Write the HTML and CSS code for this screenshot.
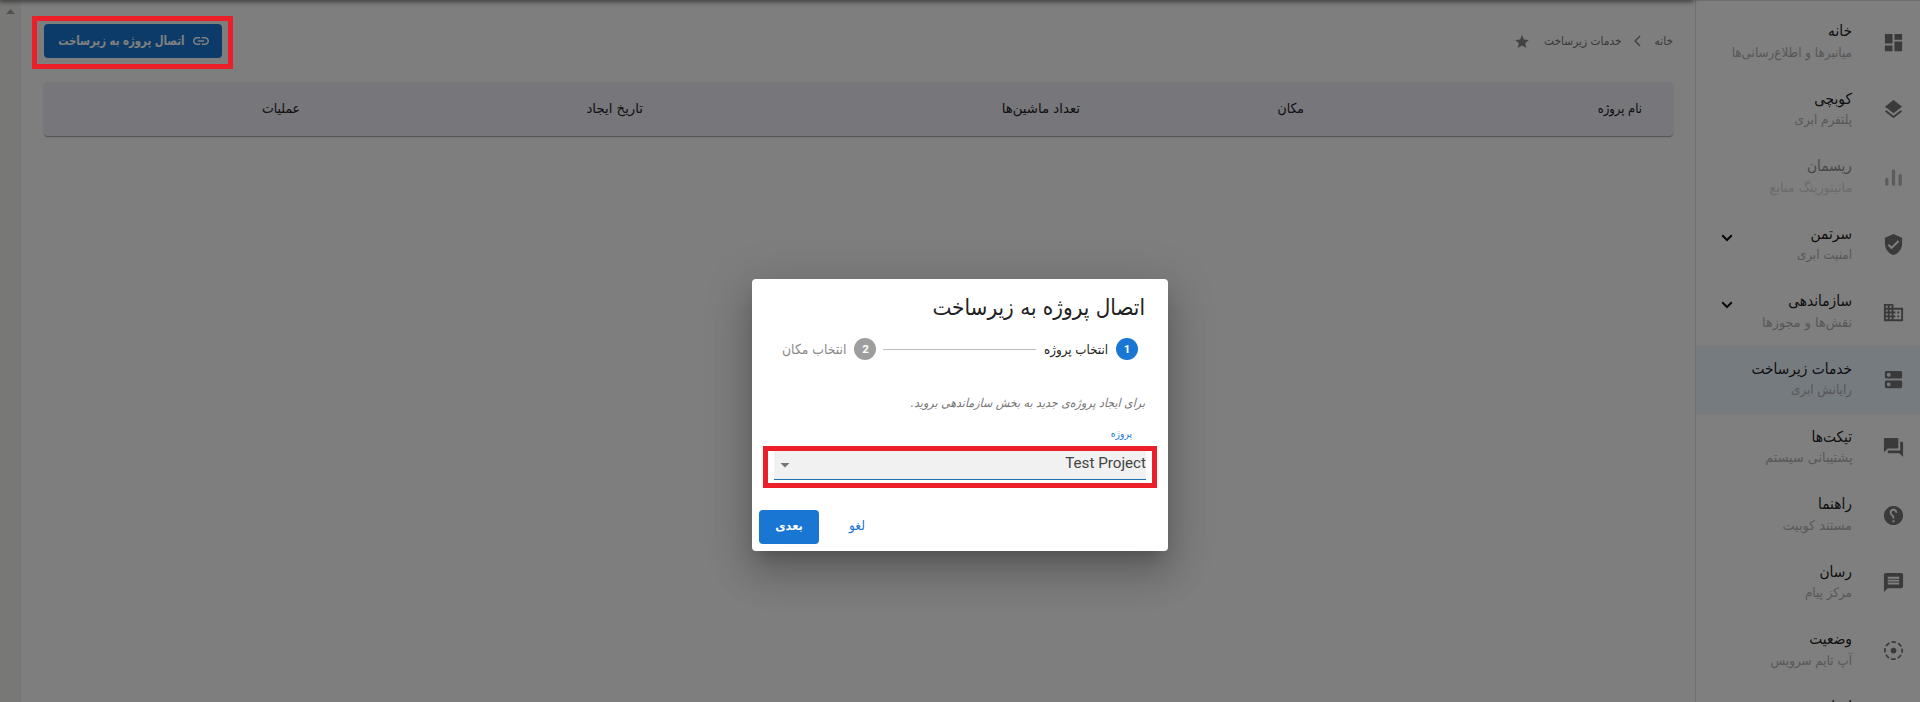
FILE: index.html
```html
<!DOCTYPE html>
<html lang="fa" dir="rtl">
<head>
<meta charset="utf-8">
<title>خدمات زیرساخت</title>
<link rel="stylesheet" href="styles.css">
</head>
<body>
<div class="app">
  <nav class="sidebar">
    <div class="item"><svg class="icon" viewBox="0 0 24 24"><path d="M3 13h8V3H3v10zm0 8h8v-6H3v6zm10 0h8V11h-8v10zm0-18v6h8V3h-8z"/></svg><div class="label"><b>خانه</b><small>میانبرها و اطلاع‌رسانی‌ها</small></div></div>
    <div class="item"><svg class="icon" viewBox="0 0 24 24"><path d="M11.99 18.54l-7.37-5.73L3 14.07l9 7 9-7-1.63-1.27-7.38 5.74zM12 16l7.36-5.73L21 9l-9-7-9 7 1.63 1.27L12 16z"/></svg><div class="label"><b>کوبچی</b><small>پلتفرم ابری</small></div></div>
    <div class="item disabled"><svg class="icon" viewBox="0 0 24 24"><g class="bars"><path d="M5 14v5M12 5v14M19 10v9"/></g></svg><div class="label"><b>ریسمان</b><small class="wide">مانیتورینگ منابع</small></div></div>
    <div class="item"><svg class="icon" viewBox="0 0 24 24"><path d="M12 1L3 5v6c0 5.550 3.840 10.740 9 12 5.160-1.260 9-6.450 9-12V5l-9-4zm-2 16l-4-4 1.410-1.410L10 14.170l6.590-6.590L18 9l-8 8z"/></svg><div class="label"><b>سرتمن</b><small>امنیت ابری</small></div><svg class="chev" viewBox="0 0 12 8"><path d="M1.200 1.200L6 6l4.800-4.800"/></svg></div>
    <div class="item"><svg class="icon" viewBox="0 0 24 24"><path d="M12 7V3H2v18h20V7H12zM6 19H4v-2h2v2zm0-4H4v-2h2v2zm0-4H4V9h2v2zm0-4H4V5h2v2zm4 12H8v-2h2v2zm0-4H8v-2h2v2zm0-4H8V9h2v2zm0-4H8V5h2v2zm10 12h-8v-2h2v-2h-2v-2h2v-2h-2V9h8v10zm-2-8h-2v2h2v-2zm0 4h-2v2h2v-2z"/></svg><div class="label"><b>سازماندهی</b><small class="wide">نقش‌ها و مجوزها</small></div><svg class="chev" viewBox="0 0 12 8"><path d="M1.200 1.200L6 6l4.800-4.800"/></svg></div>
    <div class="item active"><svg class="icon" viewBox="0 0 24 24"><path fill-rule="evenodd" d="M4.500 3h15c.8 0 1.500.7 1.500 1.500v5c0 .8-.7 1.500-1.500 1.500h-15C3.700 11 3 10.300 3 9.500v-5C3 3.700 3.700 3 4.500 3zM7 5a2 2 0 100 4 2 2 0 000-4zM4.500 13h15c.8 0 1.500.7 1.500 1.500v5c0 .8-.7 1.500-1.500 1.500h-15c-.8 0-1.500-.7-1.500-1.500v-5c0-.8.7-1.500 1.500-1.500zM7 15a2 2 0 100 4 2 2 0 000-4z"/></svg><div class="label"><b>خدمات زیرساخت</b><small>رایانش ابری</small></div></div>
    <div class="item"><svg class="icon" viewBox="0 0 24 24"><path d="M21 6h-2v9H6v2c0 .55.45 1 1 1h11l4 4V7c0-.55-.45-1-1-1zm-4 6V3c0-.55-.45-1-1-1H3c-.55 0-1 .45-1 1v14l4-4h10c.55 0 1-.45 1-1z"/></svg><div class="label"><b>تیکت‌ها</b><small class="wide">پشتیبانی سیستم</small></div></div>
    <div class="item"><svg class="icon flip" viewBox="0 0 24 24"><path d="M12 2C6.480 2 2 6.480 2 12s4.480 10 10 10 10-4.480 10-10S17.520 2 12 2zm1 17h-2v-2h2v2zm2.070-7.750l-.9.920C13.450 12.900 13 13.500 13 15h-2v-.5c0-1.100.45-2.100 1.170-2.830l1.240-1.260c.37-.36.59-.86.59-1.410 0-1.100-.9-2-2-2s-2 .9-2 2H8c0-2.210 1.790-4 4-4s4 1.790 4 4c0 .88-.36 1.680-.93 2.250z"/></svg><div class="label"><b>راهنما</b><small class="wide">مستند کوبیت</small></div></div>
    <div class="item"><svg class="icon" viewBox="0 0 24 24"><path d="M20 2H4c-1.100 0-1.990.9-1.990 2L2 22l4-4h14c1.100 0 2-.9 2-2V4c0-1.100-.9-2-2-2zm-2 12H6v-2h12v2zm0-3H6V9h12v2zm0-3H6V6h12v2z"/></svg><div class="label"><b>رسان</b><small>مرکز پیام</small></div></div>
    <div class="item"><svg class="icon" viewBox="0 0 24 24"><circle cx="12" cy="12" r="3"/><circle class="ring" cx="12" cy="12" r="9"/></svg><div class="label"><b>وضعیت</b><small>آپ تایم سرویس</small></div></div>
    <div class="item"><div class="icon"></div><div class="label"><b>اخبار</b></div></div>
  </nav>
  <main class="main">
    <div class="topline"></div>
    <header class="bar">
      <div class="crumbs">
        <span>خانه</span>
        <svg class="crumb-chev" viewBox="0 0 7 12"><path d="M6 1L1.200 6 6 11"/></svg>
        <span class="here">خدمات زیرساخت</span>
        <svg class="star" viewBox="2 2 20 19"><path d="M12 17.270L18.180 21l-1.640-7.030L22 9.240l-7.190-.61L12 2 9.190 8.630 2 9.240l5.460 4.730L5.820 21z"/></svg>
      </div>
      <div class="btn connect"><svg class="link" viewBox="2 7 20 10"><path d="M3.900 12c0-1.710 1.390-3.100 3.100-3.100h4V7H7c-2.760 0-5 2.240-5 5s2.240 5 5 5h4v-1.900H7c-1.710 0-3.100-1.390-3.100-3.100zM8 13h8v-2H8v2zm9-6h-4v1.900h4c1.710 0 3.100 1.390 3.100 3.100s-1.390 3.100-3.100 3.100h-4V17h4c2.760 0 5-2.240 5-5s-2.240-5-5-5z"/></svg><span>اتصال پروژه به زیرساخت</span></div>
    </header>
    <div class="thead"><span class="narrow">نام پروژه</span><span>مکان</span><span class="wide">تعداد ماشین‌ها</span><span class="wide">تاریخ ایجاد</span><span>عملیات</span></div>
  </main>
  <div class="scroll"><i></i></div>
</div>
<div class="overlay">
  <section class="dialog">
    <h2><span>اتصال پروژه به زیرساخت</span></h2>
    <div class="steps">
      <i class="dot on">1</i><span class="step on">انتخاب پروژه</span><hr><i class="dot">2</i><span class="step last">انتخاب مکان</span>
    </div>
    <p class="hint"><span>برای ایجاد پروژه‌ی جدید به بخش سازماندهی بروید.</span></p>
    <label class="flabel">پروژه</label>
    <div class="field"><span dir="ltr">Test Project</span><i class="caret"></i></div>
    <footer class="actions"><a class="cancel">لغو</a><div class="btn next">بعدی</div></footer>
    <div class="mark mark-field"></div>
  </section>
</div>
<div class="mark mark-btn"></div>
</body>
</html>
```
FILE: styles.css
```css
* { box-sizing: border-box; }
body { margin: 0; width: 1920px; height: 702px; overflow: hidden; position: relative; font-family: "DejaVu Sans Condensed", "DejaVu Sans", sans-serif; font-stretch: condensed; font-size: 12px; color: #222; }
span, b, small, label, a { white-space: nowrap; }
.app { display: flex; height: 702px; overflow: hidden; background: #fdfdff; }
.sidebar { width: 225px; padding-top: 7px; background: #fff; border-left: 1px solid #dcdce2; border-top: 1px solid #ddd; flex: none; }
.item { display: flex; height: 67.6px; padding-right: 15px; }
.icon { width: 23px; height: 23px; margin-top: 22.500px; flex: none; fill: #757575; overflow: visible; }
.bars { stroke: #757575; stroke-width: 3.400; stroke-linecap: round; }
.flip { transform: scaleX(-1); }
.ring { fill: none; stroke: #757575; stroke-width: 1.800; stroke-dasharray: 4.700 2.370; stroke-dashoffset: 2.350; }
.label { margin-right: 30px; padding-top: 13px; display: flex; flex-direction: column; align-items: flex-start; flex: 1; }
.label b { font-weight: 400; font-size: 15.300px; line-height: 21px; height: 20.500px; color: #212121; }
.label small { font-size: 13.300px; line-height: 21px; height: 21px; color: #b0b0b0; }
.wide { transform: scaleX(1.070); transform-origin: right; }
.narrow { transform: scaleX(.930); transform-origin: right; }
.disabled { opacity: .5; }
.active { background: #ecf6ff; }
.chev { width: 12px; height: 8px; margin: 23px 0 0 25px; fill: none; stroke: #111; stroke-width: 2; }
.main { flex: 1; padding: 0 22px 0 23px; position: relative; }
.topline { position: absolute; left: -21px; right: 2px; top: -4px; height: 4px; box-shadow: 0 1px 5px 1px #777; }
.bar { display: flex; justify-content: space-between; align-items: center; height: 83px; padding-bottom: 1px; }
.crumbs { display: flex; align-items: center; font-size: 11.800px; color: #777; }
.crumb-chev { width: 7px; height: 12px; margin: 0 14px 0 12px; fill: none; stroke: #888; stroke-width: 1.500; }
.star { width: 14px; height: 13px; margin-right: 15px; fill: #858585; }
.btn { display: flex; align-items: center; background: #1976d2; color: #fff; border-radius: 4px; height: 34px; font-weight: 700; }
.connect { width: 178px; padding: 0 13px 0 0; gap: 8px; font-size: 12.800px; }
.connect span { transform: translateY(-1px) scaleX(.88); transform-origin: right; }
.link { width: 16px; height: 8px; fill: #fff; flex: none; }
.thead { display: grid; grid-template-columns: 338px 224px 437px 343px 1fr; align-items: center; height: 54px; padding: 0 31px 3px 0; background: #ececf6; border-radius: 4px; border-bottom: 1px solid #aaa; box-shadow: 0 0 3px #ddd; font-size: 13.800px; color: #222; }
.scroll { width: 21px; background: #f1f1ef; flex: none; padding: 9px 0 0 6px; }
.scroll i { display: block; width: 9px; height: 5px; background: #a3a3a3; clip-path: polygon(50% 0, 100% 100%, 0 100%); margin-right: 6px; }
.overlay { position: absolute; inset: 0; background: rgba(0,0,0,.5); }
.dialog { position: absolute; left: 752px; top: 279px; width: 416px; height: 272px; background: #fff; border-radius: 4px; padding: 10px 23px 0 22px; box-shadow: 0 11px 15px -7px rgba(0,0,0,.2), 0 24px 38px 3px rgba(0,0,0,.14), 0 9px 46px 8px rgba(0,0,0,.12); }
h2 { margin: 0; font-size: 22.300px; font-weight: 400; line-height: 36px; height: 38px; }
.steps { display: flex; align-items: center; height: 44px; padding: 0 7px 0 8px; font-size: 13.200px; color: #8a8a8a; }
.step.on { color: #222; }
.step.last { font-size: 13.800px; }
.dot { width: 22px; height: 22px; border-radius: 50%; background: #9e9e9e; color: #fff; font: 700 11.500px/22px Roboto, sans-serif; text-align: center; margin-left: 8px; flex: none; }
.dot.on { background: #1976d2; }
.steps hr { flex: 1; margin: 0 8px 0 7px; border: 0; border-top: 1px solid #bdbdbd; }
.hint { margin: 22px 0 0; font-size: 12.300px; font-style: italic; line-height: 20px; height: 20px; color: #757575; }
.flabel { display: block; padding: 11px 13px 0 0; line-height: 20px; height: 38px; font-size: 10.200px; color: #1976d2; }
.field { display: flex; justify-content: space-between; align-items: center; height: 29px; padding: 0 0 5px 6px; margin-right: -1px; background: #f1f1f1; border-bottom: 1px solid #1f70b5; font: 15.200px Roboto, sans-serif; color: #444; }
.caret { width: 10px; height: 5px; background: #757575; clip-path: polygon(0 0, 100% 0, 50% 100%); margin-top: 5px; }
.actions { display: flex; justify-content: flex-end; align-items: center; height: 34px; margin: 30px 0 0 -15px; gap: 30px; }
.cancel { color: #1976d2; font-size: 13.500px; padding-bottom: 4px; }
.next { width: 60px; justify-content: center; font-size: 12.600px; padding-bottom: 4px; }
.mark { position: absolute; border: 5px solid #ea1f27; }
.mark-btn { left: 32px; top: 16px; width: 201px; height: 53px; }
.mark-field { left: 11px; top: 167px; width: 394px; height: 42px; }
```
